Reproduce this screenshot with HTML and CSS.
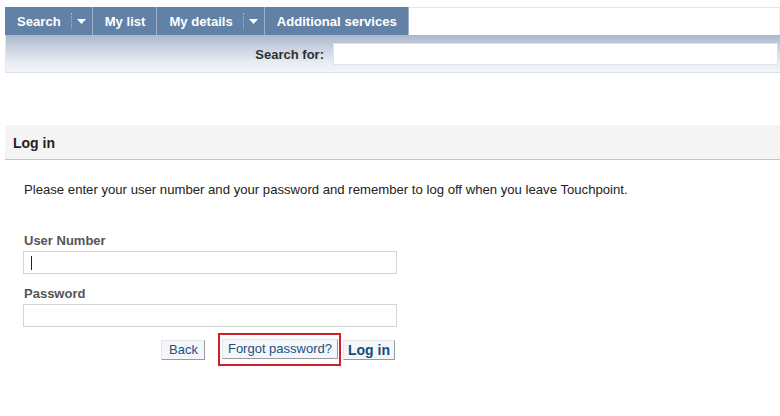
FILE: index.html
```html
<!DOCTYPE html>
<html>
<head>
<meta charset="utf-8">
<link rel="stylesheet" href="styles.css">
</head>
<body>
<div class="page">
  <div class="topnav">
    <div class="tabs">
      <div class="tab tab-split">
        <span class="tab-label">Search</span>
        <span class="sep"></span>
        <span class="drop"><svg width="9" height="5" viewBox="0 0 9 5"><path d="M0 0H9L4.5 5Z" fill="#ffffff"/></svg></span>
      </div>
      <div class="tab"><span class="tab-label">My list</span></div>
      <div class="tab tab-split">
        <span class="tab-label">My details</span>
        <span class="sep"></span>
        <span class="drop"><svg width="9" height="5" viewBox="0 0 9 5"><path d="M0 0H9L4.5 5Z" fill="#ffffff"/></svg></span>
      </div>
      <div class="tab"><span class="tab-label">Additional services</span></div>
      <div class="tabs-rest"></div>
    </div>
    <div class="searchbar">
      <label class="search-label">Search for:</label>
      <input class="search-input" type="text">
    </div>
  </div>

  <div class="login-head">Log in</div>

  <div class="login-body">
    <p class="intro">Please enter your user number and your password and remember to log off when you leave Touchpoint.</p>
    <div class="field">
      <div class="field-label">User Number</div>
      <div class="input-wrap">
        <input class="field-input" type="text">
        <span class="caret"></span>
      </div>
    </div>
    <div class="field field-2">
      <div class="field-label">Password</div>
      <div class="input-wrap">
        <input class="field-input" type="password">
      </div>
    </div>
    <div class="buttons">
      <button class="btn btn-back">Back</button>
      <span class="highlight"><button class="btn btn-forgot">Forgot password?</button></span>
      <button class="btn btn-primary">Log in</button>
    </div>
  </div>
</div>
</body>
</html>
```

FILE: styles.css
```css
html, body {
  margin: 0;
  padding: 0;
  background: #ffffff;
  font-family: "Liberation Sans", Arial, sans-serif;
}

.page {
  padding-left: 5px;
  padding-top: 7px;
}

.topnav {
  width: 775px;
}

.tabs {
  display: flex;
  height: 28px;
}

.tab {
  display: flex;
  align-items: center;
  background: #6281a7;
  color: #ffffff;
  font-weight: bold;
  font-size: 13.1px;
  border-right: 1px solid #9db0c8;
  padding: 0 11px 0 12px;
}

.tab-split {
  padding-right: 0;
}

.tab-label {
  white-space: nowrap;
  padding-top: 1px;
}

.sep {
  width: 0;
  height: 16px;
  border-left: 1px dotted #a9bbd1;
  margin-left: 10px;
}

.drop {
  display: flex;
  align-items: center;
  justify-content: center;
  width: 20px;
  height: 100%;
}

.tabs-rest {
  flex: 1;
  border-top: 1px solid #e3e6ea;
  border-right: 1px solid #eef0f2;
}

.searchbar {
  display: flex;
  align-items: center;
  justify-content: flex-end;
  height: 37px;
  background: linear-gradient(to bottom, #a9b8cc 0%, #c9d2df 35%, #e9edf2 75%, #f3f5f7 100%);
  border-bottom: 1px solid #dcdfe3;
  border-left: 1px solid #e4e7eb;
}

.search-label {
  font-size: 13px;
  font-weight: bold;
  color: #2f2f2f;
  margin-right: 9px;
  margin-top: 1px;
}

.search-input {
  width: 445px;
  height: 22px;
  box-sizing: border-box;
  border: 1px solid #dfe3e8;
  background: #ffffff;
  margin: 0 2px 0 0;
  padding: 0;
}

.login-head {
  margin-top: 52px;
  height: 35px;
  box-sizing: border-box;
  background: #f4f4f4;
  border-bottom: 1px solid #c4c4c4;
  display: flex;
  align-items: center;
  padding-left: 8px;
  padding-top: 1px;
  font-size: 14px;
  font-weight: bold;
  color: #222222;
}

.login-body {
  padding-left: 18px;
}

.intro {
  margin: 22px 0 0 1px;
  font-size: 13.15px;
  line-height: 16px;
  color: #222222;
}

.field {
  margin-top: 35px;
  width: 374px;
}

.field-2 {
  margin-top: 12px;
}

.field-label {
  font-size: 13px;
  line-height: 16px;
  font-weight: bold;
  color: #555555;
  margin-left: 1px;
}

.input-wrap {
  position: relative;
  margin-top: 2px;
}

.field-input {
  display: block;
  width: 374px;
  height: 23px;
  box-sizing: border-box;
  border: 1px solid #d4d4d4;
  background: #ffffff;
  margin: 0;
  padding: 0;
}

.caret {
  position: absolute;
  left: 8px;
  top: 5px;
  width: 1px;
  height: 14px;
  background: #222222;
}

.buttons {
  display: flex;
  align-items: center;
  justify-content: flex-end;
  width: 372px;
  margin-top: 6px;
}

.btn {
  font-family: "Liberation Sans", Arial, sans-serif;
  font-size: 13px;
  color: #1d4f83;
  background: #f4f7fa;
  border: 1px solid #e4e6e9;
  border-right-color: #9b9b9b;
  border-bottom-color: #9b9b9b;
  height: 20px;
  padding: 0 6px;
  margin: 0;
  line-height: 18px;
  cursor: pointer;
}

.btn-back {
  padding: 0 6px 0 7px;
}

.btn-forgot {
  padding: 0 5px;
}

.highlight {
  display: flex;
  align-items: flex-start;
  border: 2px solid #cf1f2b;
  padding: 4px 1px 5px 2px;
  margin-left: 13px;
  margin-right: 2px;
}

.btn-primary {
  font-weight: bold;
  font-size: 14px;
  color: #1a4a7c;
  padding: 0 4px;
}
```
